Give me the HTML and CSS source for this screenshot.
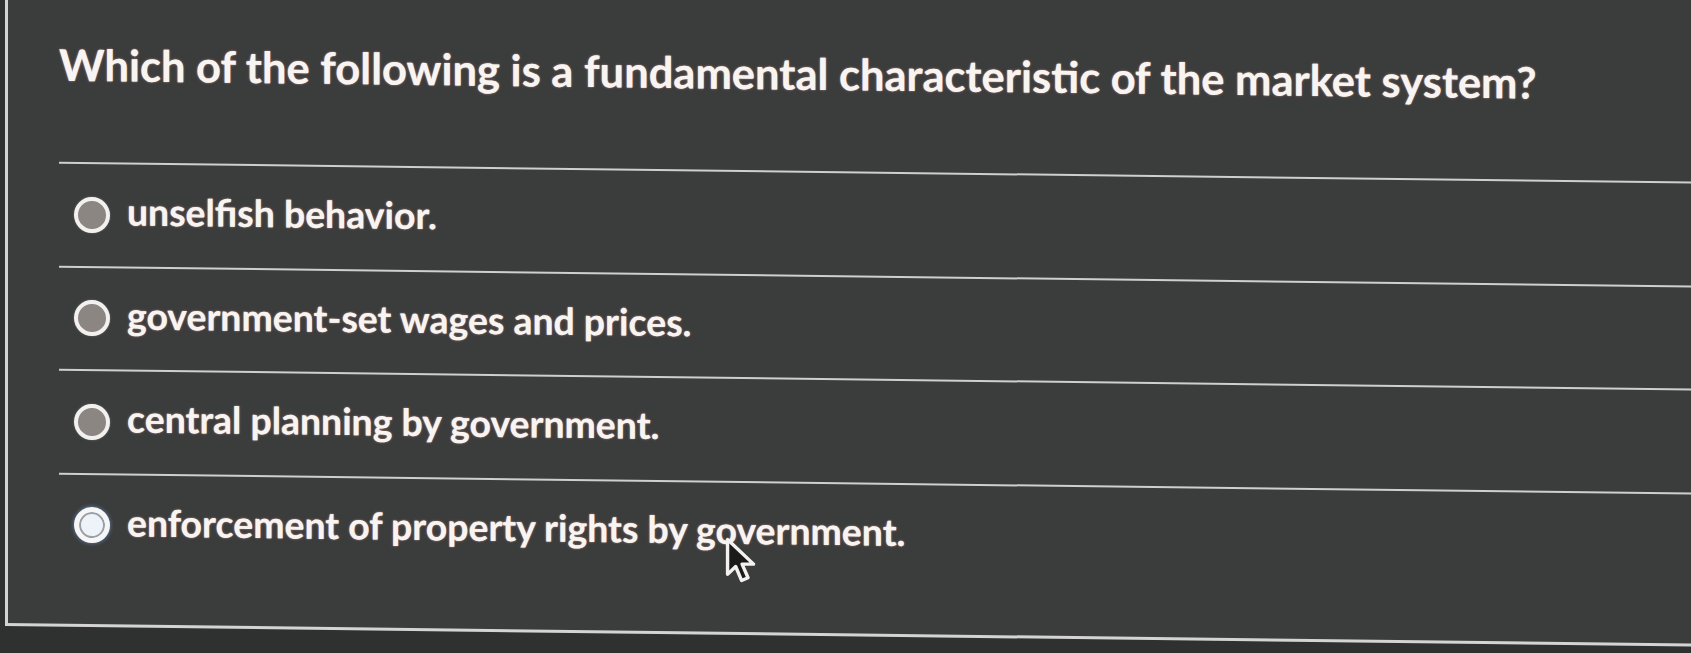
FILE: index.html
```html
<!DOCTYPE html>
<html lang="en">
<head>
<meta charset="utf-8">
<title>Quiz question</title>
<link rel="stylesheet" href="styles.css">
</head>
<body>
<main class="card">
  <h1 class="question">Which of the following is a fundamental characteristic of the market system?</h1>
  <ul class="answers">
    <li class="answer"><span class="radio"></span><span class="label">unselfish behavior.</span></li>
    <li class="answer"><span class="radio"></span><span class="label">government-set wages and prices.</span></li>
    <li class="answer"><span class="radio"></span><span class="label">central planning by government.</span></li>
    <li class="answer"><span class="radio radio-selected"></span><span class="label">enforcement of property rights by government.</span></li>
  </ul>
</main>
<svg class="cursor" width="32" height="47" viewBox="0 0 15 22" aria-hidden="true">
  <path d="M1.2 1.2 L1.2 17.5 L5 13.8 L7.8 20.4 L10.8 19.1 L8 12.7 L13.4 12.7 Z" fill="#1a1a1a" stroke="#f4f2f0" stroke-width="1.6" stroke-linejoin="round"/>
</svg>
</body>
</html>
```
FILE: styles.css
```css
html, body {
  margin: 0;
  padding: 0;
}
body {
  width: 1691px;
  height: 653px;
  overflow: hidden;
  background: #2f3030;
  position: relative;
  font-family: Lato, "Open Sans", "Liberation Sans", sans-serif;
}
.card {
  margin: -40px 0 0 5px;
  width: 1760px;
  height: 666px;
  box-sizing: border-box;
  padding: 77px 0 0 51px;
  background: #3b3c3c;
  border-left: 3px solid #d4d4d4;
  border-bottom: 3px solid #d4d4d4;
  transform: skewY(0.7deg);
  transform-origin: 0 40px;
}
.question {
  margin: 0;
  font-size: 43.5px;
  font-weight: 700;
  line-height: 52px;
  color: #f7f4f1;
  text-shadow: 0 0 1px rgba(255, 255, 255, 0.6), 0 0 3px rgba(255, 170, 150, 0.4);
  white-space: nowrap;
}
.answers {
  list-style: none;
  margin: 72px 0 0 0;
  padding: 0;
}
.answer {
  display: flex;
  align-items: center;
  height: 101.5px;
  border-top: 2px solid #cfcfcf;
}
.radio {
  flex: none;
  width: 36px;
  height: 36px;
  box-sizing: border-box;
  margin-left: 15px;
  margin-right: 17px;
  border-radius: 50%;
  border: 4px solid #f3f1ef;
  background: #8c8683;
  box-shadow: 0 0 2px rgba(255, 255, 255, 0.35);
}
.radio-selected {
  border: 5px solid #f6f6f6;
  background: #edf3f9;
  box-shadow: inset 0 0 0 2px #9a9fa4, 0 0 4px rgba(120, 170, 230, 0.7);
}
.label {
  font-size: 37.4px;
  font-weight: 700;
  line-height: 46px;
  margin-top: -7px;
  color: #f7f4f1;
  text-shadow: 0 0 1px rgba(255, 255, 255, 0.6), 0 0 3px rgba(255, 170, 150, 0.4);
  white-space: nowrap;
}
.cursor {
  position: absolute;
  left: 725px;
  top: 537px;
}
```
